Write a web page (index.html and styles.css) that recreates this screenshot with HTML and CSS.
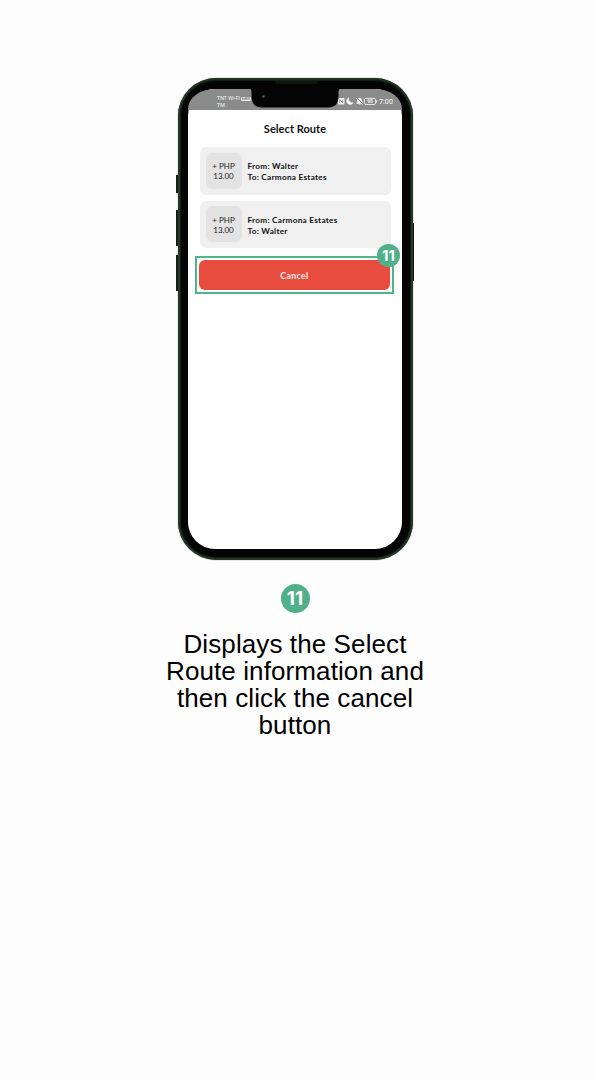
FILE: index.html
```html
<!DOCTYPE html>
<html lang="en">
<head>
<meta charset="utf-8">
<title>Select Route</title>
<link rel="stylesheet" href="styles.css">
</head>
<body>
<main class="guide">
  <div class="phone">
    <i class="key mute"></i><i class="key volume-up"></i><i class="key volume-down"></i><i class="key power"></i>
    <div class="bezel">
      <div class="screen">
        <header class="status">
          <div class="carrier"><span>TNT Wi-Fi</span><b class="vowifi">VoWiFi</b><br>TM</div>
          <div class="indicators">
            <svg width="40" height="10" viewBox="0 0 40 10">
              <rect x="0" y="2" width="6.5" height="6.5" rx="1" fill="#f1f1f1"/>
              <path d="M1.8 7V3.7l2.8 3.2V3.6" fill="none" stroke="#858585" stroke-width=".9"/>
              <path d="M10.900 1.800a3.500 3.500 0 1 0 4.500 4.700A3.500 3.500 0 0 1 10.900 1.800z" fill="#fafafa" stroke="#fafafa" stroke-width=".5"/>
              <path d="M18.600 7.400q1-1 1-2.900Q19.800 2 21.700 2T23.800 4.500Q23.800 6.400 24.800 7.400zM20.800 8.200h2" fill="#f1f1f1" stroke="#f1f1f1" stroke-width=".7"/>
              <path d="M18.400 1.300l7 7" stroke="#777" stroke-width="1"/>
              <path d="M17.900 1.900l6.800 6.800" stroke="#f1f1f1" stroke-width=".8"/>
              <rect x="26.400" y="2.300" width="11.200" height="6.200" rx="1.600" fill="none" stroke="#eee" stroke-width=".9"/>
              <path d="M38.700 4.300v2.200" stroke="#eee"/>
              <text x="32" y="7.200" text-anchor="middle" class="charge">98</text>
            </svg>
            <span>7:00</span>
          </div>
        </header>
        <h1>Select Route</h1>
        <div class="routes">
          <section class="route">
            <div class="fare">+ PHP<br>13.00</div>
            <div class="ends">From: Walter<br>To: Carmona Estates</div>
          </section>
          <section class="route">
            <div class="fare">+ PHP<br>13.00</div>
            <div class="ends">From: Carmona Estates<br>To: Walter</div>
          </section>
        </div>
        <div class="highlight">
          <button class="cancel">Cancel</button>
          <span class="badge small">11</span>
        </div>
      </div>
      <div class="notch">
        <svg width="90" height="23" viewBox="0 0 90 23">
          <path d="M0 0H90V3.500Q88.500 4 88.500 7V11Q88.500 22.500 78 22.500H12Q1.500 22.500 1.500 11V7Q1.500 4 0 3.500z" fill="#030403"/>
          <circle cx="13.500" cy="11.500" r="2" fill="#111820"/>
          <circle cx="13.500" cy="11.500" r="1" fill="#506880"/>
        </svg>
      </div>
      <i class="speaker"></i>
    </div>
  </div>
  <span class="badge">11</span>
  <p class="caption">Displays the Select<br>Route information and<br>then click the cancel<br>button</p>
</main>
</body>
</html>
```
FILE: styles.css
```css
* { box-sizing: border-box; }
body { margin: 0; min-height: 1080px; background: #fdfdfd; font-family: Lato, "Liberation Sans", sans-serif; color: #111; }
.guide { width: 590px; padding-top: 78px; display: flex; flex-direction: column; align-items: center; }
.phone { position: relative; width: 235px; height: 482px; }
.bezel { position: relative; width: 100%; height: 100%; padding: 9px 8.5px 9px 8.5px; border: 2px solid #24362a; border-top-color: #203022; border-radius: 38px; background: #030403; box-shadow: inset 0 0 0 1px #122016, 0 0 1px #172219; }
.screen { height: 100%; border-radius: 27px; padding-top: 21px; background: #fefefe; position: relative; }
.status { position: absolute; inset: 0 0 auto; height: 20.500px; padding: 0 9px 0 29px; border-radius: 27px 27px 0 0 / 20px 20px 0 0; background: #8b8b8b; color: #f5f5f5; display: flex; justify-content: space-between; overflow: hidden; }
.carrier { padding-top: 6px; font: 5.3px/7px Roboto, sans-serif; white-space: nowrap; }
.vowifi { display: inline-block; width: 10px; height: 4px; margin-left: 1px; border-radius: 1px; background: #eee; color: #777; font: 700 2.8px/4px Roboto, sans-serif; text-align: center; vertical-align: .5px; }
.indicators { display: flex; gap: 1px; padding-top: 7px; font: 7.3px/11px Roboto, sans-serif; }
.charge { font: 700 5px Roboto, sans-serif; fill: #eee; }
.notch { position: absolute; top: 5px; left: 70px; height: 23px; }
.notch svg { display: block; }
.speaker { position: absolute; top: 1px; left: 95px; width: 43px; height: 3px; border-radius: 0 0 2px 2px; background: #101511; }
.key { position: absolute; width: 3px; background: #19291d; border: 1px solid #101c13; }
.mute { left: -2px; top: 97px; height: 18px; }
.volume-up { left: -2px; top: 132px; height: 36px; }
.volume-down { left: -2px; top: 177px; height: 36px; }
.power { right: -1px; top: 145px; height: 58px; }
h1 { margin: 10px 0; font: 700 11px/17px Lato, sans-serif; letter-spacing: .05px; text-align: center; }
.routes { display: flex; flex-direction: column; gap: 6px; padding: 0 11px 0 11.500px; }
.route { height: 47.500px; padding: 6px; border-radius: 6px; background: #f0f0f0; display: flex; align-items: center; gap: 6px; }
.fare { width: 36px; height: 36px; padding-top: 8.500px; border-radius: 6px; background: #e3e3e3; font: 8px/10px Lato, sans-serif; text-align: center; color: #222; }
.ends { padding-top: 2.500px; font: 700 8.200px/11px Lato, sans-serif; letter-spacing: .28px; white-space: nowrap; }
.highlight { position: relative; width: 199px; height: 38px; margin: 8px 0 0 7px; padding: 2px; border: 2px solid #4fb488; }
.cancel { display: block; width: 100%; height: 30px; padding: 0; border: 0; border-radius: 6px; background: #e74c3f; color: #fff0ee; font: 700 8.700px/31px Lato, sans-serif; letter-spacing: .4px; }
.badge { width: 29px; height: 29px; margin-top: 23.500px; border-radius: 50%; background: #4fb089; color: #fff; font: 700 19px/29px Inter, sans-serif; letter-spacing: 0; text-align: center; }
.small { position: absolute; width: 23px; height: 23px; right: -8px; top: -14px; margin: 0; font-size: 15px; line-height: 23px; }
.caption { margin: 18.500px 0 0; font: 26px/27px "Liberation Sans", Arial, sans-serif; letter-spacing: .1px; color: #000; text-align: center; white-space: nowrap; }
```
